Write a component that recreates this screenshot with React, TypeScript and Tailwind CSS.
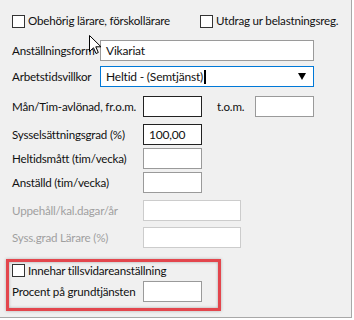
const font = { fontFamily: 'Lato, "Noto Sans", sans-serif' };

const Check = () => (
  <span className="inline-block w-[13px] h-[13px] border border-[#333333] bg-white shrink-0" />
);

const Box = ({ w, value, dark, disabled }: { w: string; value?: string; dark?: boolean; disabled?: boolean }) => (
  <div
    className={`${w} h-[21px] shrink-0 relative bg-white border flex items-center px-[5px] text-[12px] text-[#111111] ${
      dark ? "border-[#222222]" : disabled ? "border-[#cccccc]" : "border-[#9a9a9a]"
    }`}
  >
    {value}
  </div>
);

const Row = ({ label, mt, lw, disabled, children }: { label: string; mt: string; lw: string; disabled?: boolean; children: React.ReactNode }) => (
  <div className={`flex items-center ${mt}`}>
    <span className={`${lw} shrink-0 whitespace-nowrap ${disabled ? "text-[#a0a0a0]" : "text-[#111111]"}`}>{label}</span>
    {children}
  </div>
);

export default function App() {
  return (
    <div className="w-[354px] h-[320px] bg-white overflow-hidden" style={font}>
      <div className="relative w-[352px] h-[318px] bg-[#f0f0f0] border-r border-b border-[#a8a8a8] pl-[12px] pt-[14px] text-[11.6px] tracking-[-0.2px] text-[#111111] leading-none whitespace-nowrap">
        {/* kryssrutor */}
        <div className="flex items-center h-[14px]">
          <Check />
          <span className="ml-[3px] w-[172px]">Obehörig lärare, förskollärare</span>
          <Check />
          <span className="ml-[3px]">Utdrag ur belastningsreg.</span>
        </div>

        <Row label="Anställningsform" mt="mt-[12px]" lw="w-[88px]">
          <Box w="w-[214px]" value="Vikariat" />
        </Row>

        <Row label="Arbetstidsvillkor" mt="mt-[5px]" lw="w-[88px]">
          <div className="w-[214px] h-[21px] shrink-0 bg-white border border-[#0078d7] flex items-center pl-[5px] pr-[7px] text-[12px]">
            <span>Heltid - (Semtjänst)</span>
            <span className="inline-block w-[2px] h-[14px] bg-black ml-[1px]" />
            <svg className="ml-auto" width="8" height="7" viewBox="0 0 8 7">
              <path d="M0 0 H8 L4 7 Z" fill="#000" />
            </svg>
          </div>
        </Row>

        <Row label="Mån/Tim-avlönad, fr.o.m." mt="mt-[9px]" lw="w-[131px]">
          <Box w="w-[59px]" dark />
          <span className="ml-[15px] w-[38px]">t.o.m.</span>
          <Box w="w-[59px]" />
        </Row>

        <Row label="Sysselsättningsgrad (%)" mt="mt-[7px]" lw="w-[131px]">
          <Box w="w-[59px]" value="100,00" dark />
        </Row>

        <Row label="Heltidsmått (tim/vecka)" mt="mt-[3px]" lw="w-[131px]">
          <Box w="w-[59px]" />
        </Row>

        <Row label="Anställd (tim/vecka)" mt="mt-[3px]" lw="w-[131px]">
          <Box w="w-[59px]" />
        </Row>

        <Row label="Uppehåll/kal.dagar/år" mt="mt-[7px]" lw="w-[131px]" disabled>
          <Box w="w-[98px]" disabled />
        </Row>

        <Row label="Syss.grad Lärare (%)" mt="mt-[6px]" lw="w-[131px]" disabled>
          <Box w="w-[98px]" disabled />
        </Row>

        {/* markerad ruta */}
        <div className="ml-[-6px] mt-[11px] w-[215px] h-[52px] border-[3px] border-[#e3464d] shadow-[inset_0_0_3px_rgba(0,0,0,0.3),0_0_3px_rgba(0,0,0,0.25)] pl-[3px] pt-[2px]">
          <div className="flex items-center h-[13px]">
            <Check />
            <span className="ml-[3px]">Innehar tillsvidareanställning</span>
          </div>
          <div className="flex items-center mt-[4px]">
            <span className="w-[131px] shrink-0">Procent på grundtjänsten</span>
            <Box w="w-[59px]" />
          </div>
        </div>

        {/* muspekare */}
        <svg className="absolute left-[89px] top-[35px]" width="13" height="20" viewBox="0 0 13 20">
          <path d="M0.5 0.5 L0.5 16.5 L4.5 12.8 L7 18.5 L9.3 17.5 L6.8 11.8 L12 11.8 Z" fill="#fff" stroke="#000" strokeWidth="1" strokeLinejoin="miter" />
        </svg>
      </div>
    </div>
  );
}
